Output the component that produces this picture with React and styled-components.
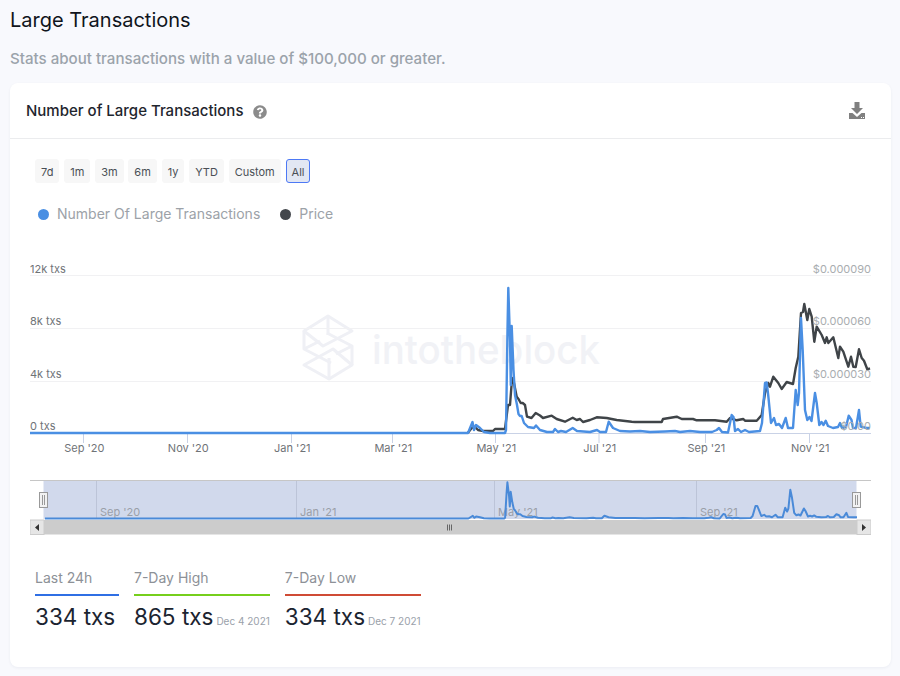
import React from 'react';
import styled, { createGlobalStyle } from 'styled-components';
import { FaQuestionCircle } from 'react-icons/fa';

const GlobalStyle = createGlobalStyle`
  html, body {
    margin: 0;
    padding: 0;
    background: #f8f9fd;
    font-family: 'Inter', sans-serif;
    overflow: hidden;
  }
`;

const Page = styled.div`
  height: 676px;
  padding: 0 9px 0 10px;
  box-sizing: border-box;
`;

const Title = styled.h1`
  margin: 0;
  padding-top: 8px;
  color: #10151c;
  font-size: 20px;
  font-weight: 400;
  line-height: 24px;
`;

const Subtitle = styled.p`
  margin: 17px 0 0;
  color: #9ba3ab;
  font-size: 15.1px;
  font-weight: 500;
  line-height: 20px;
`;

const Card = styled.section`
  margin-top: 14px;
  height: 584px;
  background: #fff;
  border-radius: 8px;
  box-shadow: 0 1px 3px rgba(40, 50, 90, 0.06);
`;

const CardHeader = styled.header`
  display: flex;
  align-items: center;
  justify-content: space-between;
  height: 55px;
  padding: 0 26px 0 16px;
  border-bottom: 1px solid #ebecee;
`;

const CardTitle = styled.div`
  display: flex;
  align-items: center;
  gap: 10px;
  color: #1f262e;
  font-size: 15px;
  font-weight: 500;
`;

const HelpIcon = styled(FaQuestionCircle)`
  width: 14px;
  height: 14px;
  margin-top: 2px;
  color: #8b8b8b;
`;

const DownloadIcon = styled.svg`
  display: block;
  width: 16px;
  height: 17px;
`;

const CardBody = styled.div`
  padding: 20px 20px 0;
`;

const RangeRow = styled.div`
  display: flex;
  gap: 4.8px;
  padding-left: 5px;
`;

const RangeButton = styled.button`
  height: 24px;
  padding: 1px 5px 0;
  border: 1px solid ${p => (p.$active ? '#4d79f5' : '#f7f7f7')};
  border-radius: 3px;
  background: ${p => (p.$active ? '#e2e7f3' : '#f7f7f7')};
  color: #4a4f55;
  font-family: inherit;
  font-size: 11px;
`;

const Legend = styled.div`
  display: flex;
  align-items: center;
  gap: 20px;
  height: 20px;
  margin-top: 20px;
  padding-left: 8px;
`;

const LegendItem = styled.div`
  display: flex;
  align-items: center;
  gap: 8px;
  color: #9ca2a8;
  font-size: 14px;
`;

const LegendDot = styled.span`
  width: 11px;
  height: 11px;
  margin-top: 2px;
  border-radius: 50%;
  background: ${p => p.$color};
`;

const ChartSvg = styled.svg`
  display: block;
  margin-top: 32px;
`;

const AxisLabel = styled.text`
  fill: #6f7377;
  font-family: 'Inter', sans-serif;
  font-size: 11px;
`;

const PriceLabel = styled.text`
  fill: #a9adb0;
  font-family: 'Inter', sans-serif;
  font-size: 11px;
  text-anchor: end;
`;

const NavLabel = styled.text`
  fill: #9a9fa8;
  font-family: 'Inter', sans-serif;
  font-size: 11px;
`;

const Watermark = styled.text`
  fill: #f1f2f6;
  font-family: 'Inter', sans-serif;
  font-size: 40px;
  font-weight: 500;
`;

const Stats = styled.div`
  display: flex;
  gap: 15px;
  margin-top: 32px;
  padding-left: 5px;
`;

const Stat = styled.div`
  display: flex;
  flex-direction: column;
  min-width: 84px;
`;

const StatLabel = styled.div`
  padding-bottom: 8px;
  border-bottom: 2px solid ${p => p.$color};
  color: #8d9197;
  font-size: 14px;
  line-height: 17px;
`;

const StatValue = styled.div`
  display: flex;
  align-items: baseline;
  gap: 3px;
  margin-top: 7px;
  color: #1b2430;
  font-size: 22.5px;
  line-height: 28px;
  white-space: nowrap;
`;

const StatDate = styled.span`
  color: #9aa1aa;
  font-size: 10px;
`;

// chart coordinates below are in page pixels, the svg is shifted with a viewBox
const blue = [
  [30, 433], [468, 433], [472.5, 422], [474, 430], [476, 425], [480, 428], [484, 432], [490, 433], [505, 433],
  [506, 430], [507.5, 330], [508.3, 288], [510, 340], [510.8, 385], [511.7, 326], [513.5, 370], [515, 395],
  [517, 405], [518.5, 414], [520, 416], [521.7, 416], [524, 423], [528, 427], [534, 428], [536, 425.5], [540, 430],
  [547, 432], [553, 432], [555, 429], [558, 432], [561, 431], [566, 432], [572.7, 428], [577, 431], [590, 432],
  [597, 430], [600, 432], [606, 432], [608.7, 421.7], [613, 428], [620, 431], [630, 431.5], [640, 431], [650, 432],
  [665, 431.5], [675, 431], [680, 432], [690, 431], [700, 432], [712, 432], [716.7, 430], [719, 428], [722, 432],
  [728, 432.5], [731.7, 415], [733.5, 417], [735, 431], [738, 429], [741, 432], [745, 430], [749, 432], [760, 431],
  [762, 423], [765, 383], [766.7, 382.5], [768.3, 396], [771, 423], [774, 418], [776, 425], [779, 424], [782, 428],
  [785.7, 418], [788, 428], [793, 428], [795.7, 390], [797.7, 405], [799, 393], [801, 318], [802.7, 350], [805, 410],
  [807.3, 420], [809.5, 417], [811.5, 421], [815, 393], [816.7, 403], [819.3, 425], [821.5, 422], [823.5, 425],
  [825.7, 420.7], [828, 426], [833, 428], [838, 427], [840, 423], [842, 428], [846, 427], [848.7, 415.7], [851.5, 420],
  [853, 428], [856, 428], [859, 410], [860.7, 426.7], [866.7, 428], [870, 428],
];

const black = [
  [468, 432.7], [471.7, 428], [475, 427], [478, 430], [483, 431], [493, 431], [495, 429], [505, 429], [508, 405],
  [510, 405], [511.7, 383], [513, 378], [516.7, 396.7], [518.5, 399], [520.7, 403], [522.7, 403], [525, 405],
  [527, 416.7], [531.5, 418], [535.7, 413], [540, 415.5], [543, 418], [551.7, 415.7], [556.7, 419], [565, 421.7],
  [572.7, 417.7], [576.7, 420], [580, 419], [583, 422], [590, 420], [596.7, 417.3], [606.7, 418], [616.7, 420],
  [631.7, 421.7], [635, 422], [661.7, 422], [663, 419], [676.7, 416.7], [681.7, 419], [693, 419], [696.7, 420.3],
  [715, 420.3], [726.7, 421.7], [730, 418], [736.7, 420.3], [743.3, 419], [745, 420.7], [756.7, 420.7], [761.7, 415],
  [765, 393], [768.3, 383], [770, 386.7], [773.3, 376.7], [778.3, 383], [781.7, 389], [786.7, 382], [793, 384],
  [795.7, 368], [798.3, 356.7], [801, 313], [803, 312], [804.3, 304], [807.3, 320], [809.3, 309], [811.7, 316.7],
  [814.3, 341.7], [816.7, 326.7], [821.7, 335], [825, 343], [826.7, 337.3], [828.3, 343], [833.3, 337.3], [838.3, 358],
  [840, 346.7], [843.3, 351.7], [848.3, 366.7], [851, 356.7], [853.3, 366.7], [855.7, 367], [859, 349.3], [861.7, 358],
  [864, 360.7], [867.3, 369.3], [870, 368.3],
];

const toPolyline = pts => pts.map(([x, y]) => `${x},${y}`).join(' ');
const toNavigator = pts =>
  pts.map(([x, y]) => `${(45 + (x - 30) * 0.9667).toFixed(1)},${(518.5 - (433 - y) * 0.25).toFixed(1)}`).join(' ');

const ticks = [
  { x: 83.5, label: "Sep '20" },
  { x: 187.5, label: "Nov '20" },
  { x: 291.5, label: "Jan '21" },
  { x: 392.5, label: "Mar '21" },
  { x: 495.5, label: "May '21" },
  { x: 599, label: "Jul '21" },
  { x: 705.5, label: "Sep '21" },
  { x: 809.5, label: "Nov '21" },
];

const navTicks = [
  { x: 96.5, label: "Sep '20" },
  { x: 296.5, label: "Jan '21" },
  { x: 494.5, label: "May '21" },
  { x: 696.5, label: "Sep '21" },
];

const ranges = ['7d', '1m', '3m', '6m', '1y', 'YTD', 'Custom', 'All'];

function LogoMark() {
  return (
    <g fill="none" stroke="#eff0f5" strokeWidth="3" strokeLinejoin="round">
      <path d="M328 316 L352 331 L323 346 L304 331 Z" />
      <path d="M328 316 V335 M304 331 V349 L331 363 M304 349 L320 341" />
      <path d="M329 379 L304 365 L333 349 L352 365 Z" />
      <path d="M329 379 V358 M352 365 V346 L327 333 M352 346 L336 354" />
    </g>
  );
}

function Chart() {
  return (
    <ChartSvg width="841" height="282" viewBox="30 255 841 282">
      <Watermark x="372" y="363.5" textLength="228" lengthAdjust="spacingAndGlyphs">intotheblock</Watermark>
      <LogoMark />

      {[275.5, 328.5, 381.5].map(y => (
        <line key={y} x1="30" x2="871" y1={y} y2={y} stroke="#f1f1f3" />
      ))}
      <line x1="30" x2="871" y1="433.5" y2="433.5" stroke="#c9d2e6" />
      {ticks.map(t => (
        <g key={t.x}>
          <line x1={t.x} x2={t.x} y1="433" y2="443" stroke="#c9d2e6" />
          <AxisLabel x={t.x + 0.8} y="452" textAnchor="middle">{t.label}</AxisLabel>
        </g>
      ))}

      <AxisLabel x="30" y="273">12k txs</AxisLabel>
      <AxisLabel x="30" y="325">8k txs</AxisLabel>
      <AxisLabel x="30" y="378">4k txs</AxisLabel>
      <AxisLabel x="30" y="430">0 txs</AxisLabel>

      <polyline points={toPolyline(black)} fill="none" stroke="#3f4448" strokeWidth="2.4" strokeLinejoin="round" />
      <polyline points={toPolyline(blue)} fill="none" stroke="#4a8fe3" strokeWidth="2.4" strokeLinejoin="round" />

      <PriceLabel x="871" y="273">$0.000090</PriceLabel>
      <PriceLabel x="871" y="325">$0.000060</PriceLabel>
      <PriceLabel x="871" y="378">$0.000030</PriceLabel>
      <PriceLabel x="871" y="430">$0.00</PriceLabel>

      {/* navigator */}
      <rect x="43.5" y="481" width="813" height="38" fill="#d1d9ec" />
      <line x1="30" x2="871" y1="480.5" y2="480.5" stroke="#c6c6c6" />
      {navTicks.map(t => (
        <g key={t.x}>
          <line x1={t.x} x2={t.x} y1="481" y2="519" stroke="#bcc4d8" />
          <NavLabel x={t.x + 3.5} y="516">{t.label}</NavLabel>
        </g>
      ))}
      <polyline points={toNavigator([[30, 433], ...blue])} fill="none" stroke="#4a8ad8" strokeWidth="2" strokeLinejoin="round" />
      <rect x="39.5" y="492.5" width="8" height="15" fill="#f2f2f2" stroke="#999" />
      <path d="M42.5 495 V505 M44.5 495 V505" stroke="#999" />
      <rect x="852.5" y="492.5" width="8" height="15" fill="#f2f2f2" stroke="#999" />
      <path d="M855.5 495 V505 M857.5 495 V505" stroke="#999" />

      {/* scrollbar */}
      <rect x="30" y="520" width="841" height="14.5" fill="#cccccc" />
      <rect x="30" y="520" width="14" height="14.5" fill="#e6e6e6" stroke="#ccc" />
      <rect x="857" y="520" width="14" height="14.5" fill="#e6e6e6" stroke="#ccc" />
      <path d="M39 524 L35 527.5 L39 531 Z" fill="#333" />
      <path d="M862 524 L866 527.5 L862 531 Z" fill="#333" />
      <path d="M447.5 524.5 V530.5 M449.5 524.5 V530.5 M451.5 524.5 V530.5" stroke="#666" />
    </ChartSvg>
  );
}

export default function App() {
  return (
    <Page>
      <GlobalStyle />
      <Title>Large Transactions</Title>
      <Subtitle>Stats about transactions with a value of $100,000 or greater.</Subtitle>
      <Card>
        <CardHeader>
          <CardTitle>
            Number of Large Transactions
            <HelpIcon />
          </CardTitle>
          <DownloadIcon viewBox="0 0 16 17">
            <path d="M5.5 0 H10.5 V6 H14 L8 12 L2 6 H5.5 Z" fill="#808080" />
            <path d="M0 11 H3.5 L8 15 L12.5 11 H16 V17 H0 Z" fill="#808080" />
            <path d="M12 15 h1 v1 h-1 z M14 15 h1 v1 h-1 z" fill="#fff" />
          </DownloadIcon>
        </CardHeader>
        <CardBody>
          <RangeRow>
            {ranges.map(r => (
              <RangeButton key={r} $active={r === 'All'}>{r}</RangeButton>
            ))}
          </RangeRow>
          <Legend>
            <LegendItem><LegendDot $color="#4a8fe3" />Number Of Large Transactions</LegendItem>
            <LegendItem><LegendDot $color="#43474c" />Price</LegendItem>
          </Legend>
          <Chart />
          <Stats>
            <Stat>
              <StatLabel $color="#2f6fe4">Last 24h</StatLabel>
              <StatValue>334 txs</StatValue>
            </Stat>
            <Stat>
              <StatLabel $color="#76cf1c">7-Day High</StatLabel>
              <StatValue>865 txs <StatDate>Dec 4 2021</StatDate></StatValue>
            </Stat>
            <Stat>
              <StatLabel $color="#cf4b35">7-Day Low</StatLabel>
              <StatValue>334 txs <StatDate>Dec 7 2021</StatDate></StatValue>
            </Stat>
          </Stats>
        </CardBody>
      </Card>
    </Page>
  );
}
